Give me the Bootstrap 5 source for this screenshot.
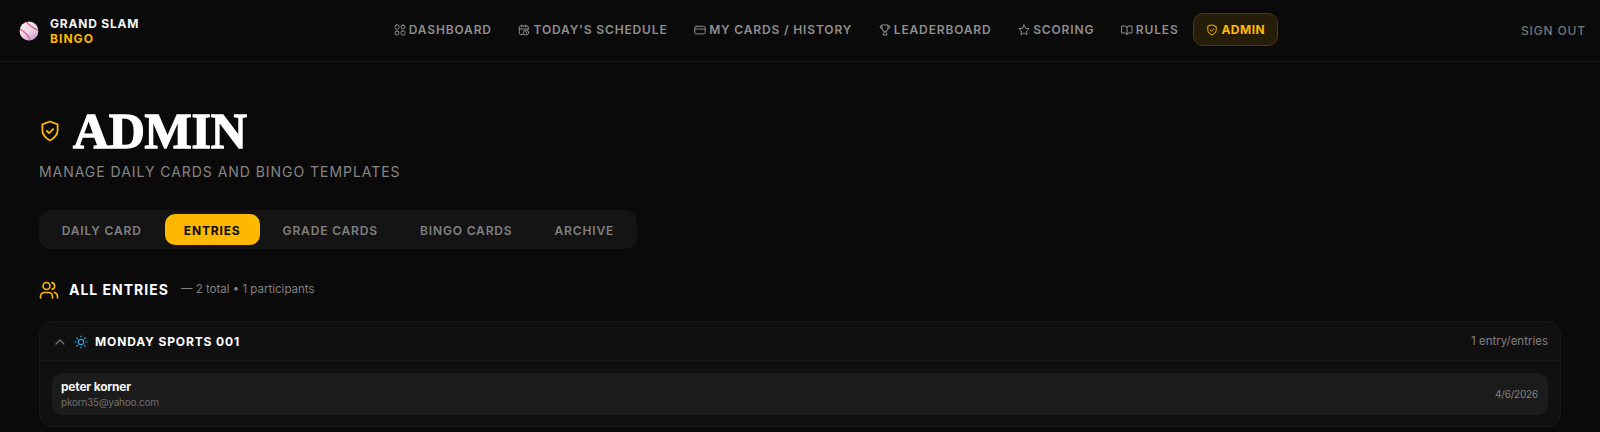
<!DOCTYPE html>
<html lang="en"><head><meta charset="utf-8"><title>Admin</title>
<link href="https://cdn.jsdelivr.net/npm/bootstrap@5.3.0/dist/css/bootstrap.min.css" rel="stylesheet">
<style>
html,body{height:432px;overflow:hidden}
body{background:#0a0a0a;font-family:Inter,"Liberation Sans",sans-serif;color:#fff}
svg{flex:none;fill:none;stroke:currentColor;stroke-linecap:round;stroke-linejoin:round}
.top-bar{height:62px;border-bottom:1px solid #1a1a1a;padding:0 14px 0 19px}
.brand-name{font-size:12px;font-weight:700;letter-spacing:.8px;line-height:15px;color:#f5f5f5}
.brand-sub{font-size:12px;font-weight:700;letter-spacing:1.05px;line-height:15px;color:#ffb800}
.brand-wrap{gap:11px;width:361.500px}
.nav-item-link{font-size:12px;font-weight:600;letter-spacing:.85px;color:#8e8e8e;text-decoration:none;padding:0 13.300px;gap:3px;height:32px}
.nav-wrap{margin-bottom:2px}
.nav-item-link.on{color:#ffb800;font-weight:700;letter-spacing:.5px;background:#261d08;border:1px solid #4a3a10;border-radius:10px;height:33px;padding:0 11.500px;gap:3.500px;margin-left:1.500px}
.sign-out{font-size:12px;letter-spacing:.85px;color:#757575;font-weight:500;text-decoration:none}
.page-body{padding:0 39px}
.page-head{margin-top:39px;gap:13px;height:60px}
.head-icon{margin-left:1px;color:#ffb800}
.page-title{font-family:"Liberation Serif",serif;font-weight:700;font-size:50px;line-height:60px;letter-spacing:-.3px;margin:0;-webkit-text-stroke:1.300px #fff;color:#fff}
.page-sub{font-size:14px;letter-spacing:.96px;color:#858585;line-height:20px;margin-top:1px}
.tab-strip{margin-top:28px;width:598px;height:39px;background:#141414;border-radius:12px;padding:4px 4px 4px 3.700px;gap:4px}
.tab-item{font-size:12px;font-weight:600;letter-spacing:.85px;color:#808080;padding:2px 19px 0;height:31px;border:0;background:none;border-radius:10px;display:flex;align-items:center;white-space:nowrap}
.tab-item.on{background:#ffb800;color:#0a0a0a;font-weight:700}
.sect-head{margin-top:29px;height:24px;gap:10px}
.sect-icon{color:#ffb800}
.sect-title{font-size:14px;font-weight:700;letter-spacing:1px;margin:0;color:#fff}
.sect-count{font-size:11.500px;color:#808080;margin-left:2px}
.entry-panel{margin-top:19px;background:#101010;border:1px solid #181818;border-radius:14px;height:106px}
.panel-head{height:39px;padding:2px 12px 0 14px;border-bottom:1px solid #181818}
.panel-chev{color:#777}
.panel-sun{color:#38a3dc;margin-left:8px}
.panel-name{font-size:12px;font-weight:700;letter-spacing:.87px;color:#fff;margin-left:7px}
.panel-count{font-size:11.500px;color:#808080}
.entry-row{margin:12px 12px 0;height:42px;background:#1b1b1b;border-radius:10px;padding:0 10px 0 9px}
.entry-name{font-size:12px;font-weight:700;line-height:15px;color:#f5f5f5;letter-spacing:-.2px;margin-bottom:1px}
.entry-mail{font-size:10px;line-height:14px;color:#707070;letter-spacing:-.22px}
.entry-date{font-size:10px;color:#808080;letter-spacing:-.2px}
</style></head>
<body>
<header class="top-bar d-flex align-items-center">
  <div class="brand-wrap d-flex align-items-center">
    <svg width="20" height="20" viewBox="0 0 20 20" style="stroke:none"><defs><linearGradient id="ball" x1="0.2" y1="0" x2="0.8" y2="1"><stop offset="0" stop-color="#f7efef"/><stop offset=".55" stop-color="#ecd3e0"/><stop offset="1" stop-color="#c79ad8"/></linearGradient></defs><circle cx="10" cy="10" r="9.400" fill="url(#ball)"/><path d="M8 1.500Q12 6 18.500 9M1.500 8.500Q8 12 11 18.500" stroke="#e0579a" stroke-width="1.400" stroke-dasharray="1.600 1.400" fill="none"/></svg>
    <div><div class="brand-name">GRAND SLAM</div><div class="brand-sub">BINGO</div></div>
  </div>
  <nav class="nav-wrap d-flex align-items-center flex-grow-1">
    <a class="nav-item-link d-flex align-items-center" href="#"><svg width="12" height="12" viewBox="0 0 12 12" stroke-width="1"><rect x="1" y="1" width="4" height="4" rx="1.400"/><rect x="7" y="1" width="4" height="4" rx="2"/><rect x="1" y="7" width="4" height="4" rx="2"/><rect x="7" y="7" width="4" height="4" rx="1.400"/></svg>DASHBOARD</a>
    <a class="nav-item-link d-flex align-items-center" href="#"><svg width="12" height="12" viewBox="0 0 12 12" stroke-width="1"><path d="M5 10.500H2.500a1.200 1.200 0 0 1-1.200-1.200V3.200A1.200 1.200 0 0 1 2.500 2h6.600a1.200 1.200 0 0 1 1.200 1.200V5M3.800 1v2M7.800 1v2M1.300 5h9"/><circle cx="8" cy="8.500" r="2.600"/><path d="M8 7.400v1.200l.7.4"/></svg>TODAY'S SCHEDULE</a>
    <a class="nav-item-link d-flex align-items-center" href="#"><svg width="12" height="12" viewBox="0 0 12 12" stroke-width="1"><rect x=".8" y="2.300" width="10.400" height="7.600" rx="1.400"/><path d="M.8 5h10.400"/></svg>MY CARDS / HISTORY</a>
    <a class="nav-item-link d-flex align-items-center" href="#"><svg width="12" height="12" viewBox="0 0 12 12" stroke-width="1"><path d="M3 1h6v3.500a3 3 0 0 1-6 0zM3 2H1.200v.8A2 2 0 0 0 3 4.800M9 2h1.800v.8A2 2 0 0 1 9 4.800M5.200 7.400v1.400L4 10v1h4v-1L6.800 8.800V7.400"/></svg>LEADERBOARD</a>
    <a class="nav-item-link d-flex align-items-center" href="#"><svg width="12" height="12" viewBox="0 0 12 12" stroke-width="1"><path d="M6 1l1.500 3.200 3.500.5-2.500 2.400.6 3.500L6 8.900l-3.100 1.700.6-3.500L1 4.700l3.500-.5z"/></svg>SCORING</a>
    <a class="nav-item-link d-flex align-items-center" href="#"><svg width="12" height="12" viewBox="0 0 12 12" stroke-width="1"><path d="M6 3.200v7.300M1 2h3a2 2 0 0 1 2 1.600A2 2 0 0 1 8 2h3v7H7.800A1.800 1.800 0 0 0 6 10.500 1.800 1.800 0 0 0 4.200 9H1z"/></svg>RULES</a>
    <a class="nav-item-link on d-flex align-items-center" href="#"><svg width="12" height="12" viewBox="0 0 12 12" stroke-width="1"><path d="M6 1l4.200 1.500v3.300c0 2.600-2 4.200-4.200 5.200-2.200-1-4.200-2.600-4.200-5.200V2.500z"/><path d="M4.300 6l1.200 1.100 2.100-2"/></svg>ADMIN</a>
  </nav>
  <a class="sign-out" href="#">SIGN OUT</a>
</header>
<main class="page-body">
  <div class="page-head d-flex align-items-center">
    <svg class="head-icon" width="20" height="22" viewBox="0 0 20 22" stroke-width="1.800"><path d="M10 1.500l7.600 2.800v6.200c0 4.600-3.500 7.700-7.600 10-4.100-2.300-7.600-5.400-7.600-10V4.300z"/><path d="M6.800 11l2.300 2.200 4.100-4"/></svg>
    <h1 class="page-title">ADMIN</h1>
  </div>
  <div class="page-sub">MANAGE DAILY CARDS AND BINGO TEMPLATES</div>
  <div class="tab-strip d-flex align-items-center">
    <button class="tab-item" type="button">DAILY CARD</button>
    <button class="tab-item on" type="button">ENTRIES</button>
    <button class="tab-item" type="button">GRADE CARDS</button>
    <button class="tab-item" type="button">BINGO CARDS</button>
    <button class="tab-item" type="button">ARCHIVE</button>
  </div>
  <div class="sect-head d-flex align-items-center">
    <svg class="sect-icon" width="20" height="20" viewBox="0 0 20 20" stroke-width="1.600"><circle cx="7.500" cy="6" r="3.500"/><path d="M1.500 18v-1.500a4 4 0 0 1 4-4h4a4 4 0 0 1 4 4V18M13 2.600a3.500 3.500 0 0 1 0 6.800M18.500 18v-1.500a4 4 0 0 0-3-3.900"/></svg>
    <h2 class="sect-title">ALL ENTRIES</h2>
    <span class="sect-count">— 2 total • 1 participants</span>
  </div>
  <section class="entry-panel">
    <div class="panel-head d-flex align-items-center">
      <svg class="panel-chev" width="12" height="12" viewBox="0 0 12 12" stroke-width="1.200"><path d="M2 8l4-4 4 4"/></svg>
      <svg class="panel-sun" width="14" height="14" viewBox="0 0 14 14" stroke-width="1.200"><circle cx="7" cy="7" r="2.700"/><path d="M7 1v1M7 12v1M1 7h1M12 7h1M2.800 2.800l.7.7M10.500 10.500l.7.7M2.800 11.200l.7-.7M10.500 3.500l.7-.7"/></svg>
      <span class="panel-name">MONDAY SPORTS 001</span>
      <span class="panel-count ms-auto">1 entry/entries</span>
    </div>
    <div class="entry-row d-flex align-items-center justify-content-between">
      <div><div class="entry-name">peter korner</div><div class="entry-mail">pkorn35@yahoo.com</div></div>
      <div class="entry-date">4/6/2026</div>
    </div>
  </section>
</main>
<script src="https://cdn.jsdelivr.net/npm/bootstrap@5.3.0/dist/js/bootstrap.bundle.min.js"></script>
</body></html>
